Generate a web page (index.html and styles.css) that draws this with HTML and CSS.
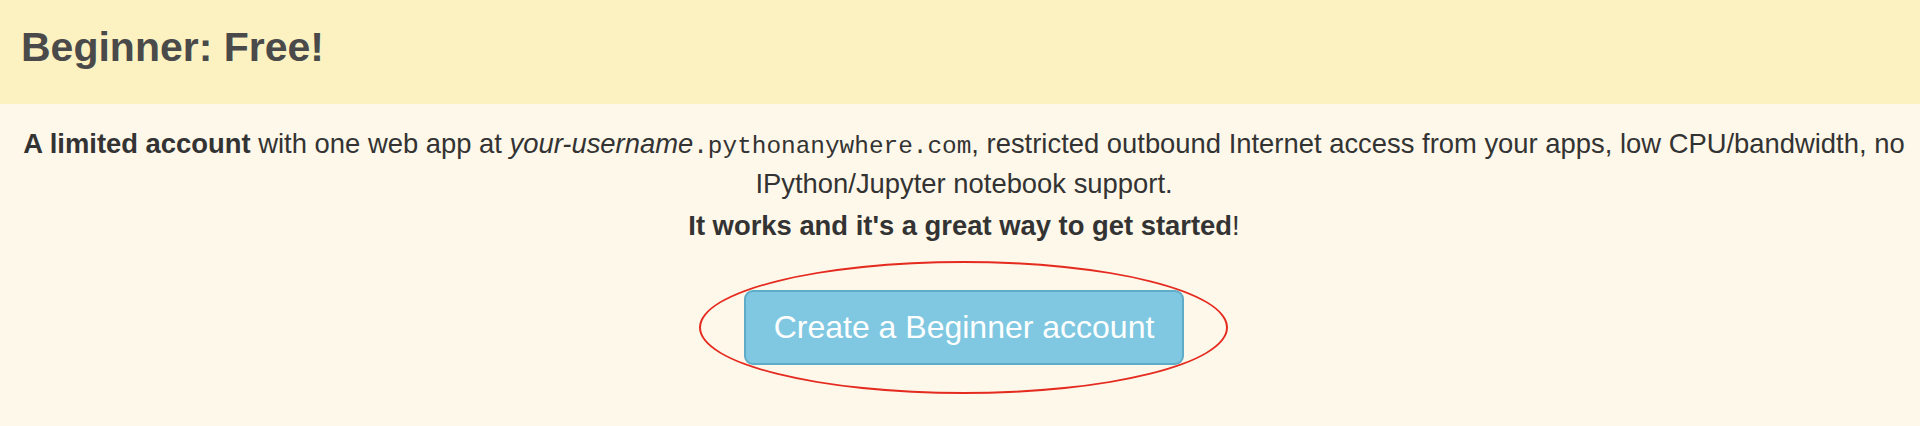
FILE: index.html
```html
<!DOCTYPE html>
<html lang="en">
<head>
<meta charset="utf-8">
<title>Beginner: Free!</title>
<link rel="stylesheet" href="styles.css">
</head>
<body>
<section class="panel">
  <header class="panel-heading">
    <h3 class="panel-title">Beginner: Free!</h3>
  </header>
  <div class="panel-body">
    <p class="desc"><strong>A limited account</strong> with one web app at <em>your-username</em><code>.pythonanywhere.com</code>, restricted outbound Internet access from your apps, low CPU/bandwidth, no<br>IPython/Jupyter notebook support.</p>
    <p class="desc lead"><strong>It works and it's a great way to get started</strong>!</p>
    <div class="cta">
      <span class="cta-wrap">
        <a class="btn" href="#">Create a Beginner account</a>
        <span class="ring" aria-hidden="true"></span>
      </span>
    </div>
  </div>
</section>
</body>
</html>
```

FILE: styles.css
```css
html, body {
  margin: 0;
  padding: 0;
}

body {
  background: #fdf8e9;
  font-family: "Liberation Sans", Arial, Helvetica, sans-serif;
  color: #333333;
  width: 1920px;
  height: 426px;
  overflow: hidden;
}

.panel {
  display: flex;
  flex-direction: column;
}

.panel-heading {
  background: #fcf2c1;
  height: 104px;
  box-sizing: border-box;
  padding: 25px 21px 0 21px;
}

.panel-title {
  margin: 0;
  font-size: 41px;
  line-height: 45px;
  font-weight: bold;
  color: #4a4a4a;
}

.panel-body {
  padding: 21px 14px 0 22px;
  text-align: center;
}

.desc {
  margin: 0;
  font-size: 27.4px;
  line-height: 37px;
  color: #333333;
  white-space: nowrap;
}

.desc.lead {
  margin-top: 5px;
}

.desc strong {
  font-weight: bold;
}

.desc em {
  font-style: italic;
}

.desc code {
  font-family: "Liberation Mono", "Courier New", monospace;
  font-size: 24.4px;
  color: #333333;
  background: none;
  padding: 0;
}

.cta {
  display: flex;
  justify-content: center;
  margin-top: 46px;
}

.cta-wrap {
  position: relative;
  display: inline-flex;
}

.btn {
  display: inline-block;
  box-sizing: border-box;
  width: 440px;
  height: 75px;
  line-height: 71px;
  font-size: 32px;
  color: #ffffff;
  text-decoration: none;
  background: #80c8e1;
  border: 2px solid #5eacc7;
  border-radius: 9px;
  text-align: center;
}

.ring {
  position: absolute;
  left: -45px;
  right: -44px;
  top: -29px;
  bottom: -29px;
  border: 2px solid #e52a20;
  border-radius: 50%;
  pointer-events: none;
}
```
